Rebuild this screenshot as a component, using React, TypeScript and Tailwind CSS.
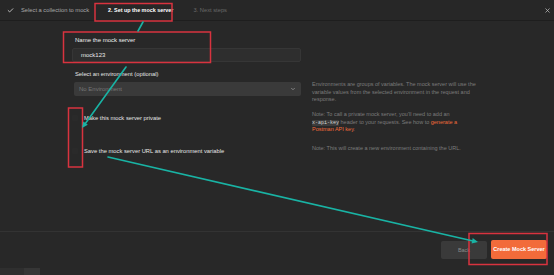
import { Check, X, ChevronDown } from 'lucide-react'

const font = { fontFamily: '"Liberation Sans", Arial, sans-serif' }

function Annotations() {
  return (
    <svg className="absolute inset-0 pointer-events-none" width={554} height={275} viewBox="0 0 554 275">
      {/* red highlight boxes */}
      <g fill="none" stroke="#d8333f" strokeWidth={1.5}>
        <rect x={95} y={3.5} width={77} height={17.5} />
        <rect x={63.5} y={32} width={147} height={30.5} />
        <rect x={68.5} y={108} width={14} height={59} />
        <rect x={469} y={233.5} width={78} height={31} />
      </g>
      {/* teal arrows */}
      <g stroke="#19b3a4" strokeWidth={1.6} strokeLinecap="round">
        <line x1={143} y1={22} x2={138} y2={31} />
        <line x1={126} y1={67} x2={85} y2={124} />
        <line x1={108} y1={157} x2={473} y2={241} />
      </g>
      <g fill="#19b3a4">
        <polygon points="82,128 87.8,124.8 83.3,121.5" />
        <polygon points="478,242 471.6,243.4 472.7,238" />
      </g>
    </svg>
  )
}

export default function App() {
  return (
    <div className="relative w-[554px] h-[275px] overflow-hidden bg-[#282828] text-white flex flex-col" style={font}>
      {/* step bar */}
      <div className="h-[21px] shrink-0 flex items-center border-b border-[#1e1e1e] bg-[#272727] text-[5.75px]">
        <Check className="ml-[7px] w-[7px] h-[7px] text-[#d0d0d0]" strokeWidth={3} />
        <span className="ml-[7px] text-[#a8a8a8]">Select a collection to mock</span>
        <span className="ml-[19px] text-[5.4px] font-bold text-white">2. Set up the mock server</span>
        <span className="ml-[20px] text-[#6a6a6a]">3. Next steps</span>
        <X className="ml-auto mr-[3px] w-[7px] h-[7px] text-[#bdbdbd]" strokeWidth={2.5} />
      </div>

      {/* form */}
      <div className="flex-1 flex pl-[75px] pt-[15px]">
        <div className="w-[226px] flex flex-col text-[6px] leading-[8px]">
          <span className="text-[#eeeeee]">Name the mock server</span>
          <div className="mt-[4px] h-[14px] -ml-[3px] w-[229px] flex items-center pl-[8px] bg-[#2e2e2e] border border-[#363636] rounded-[2px] text-[#e8e8e8]">
            mock123
          </div>
          <span className="mt-[8px] text-[5.8px] text-[#e6e6e6]">Select an environment (optional)</span>
          <div className="mt-[4px] h-[14px] -ml-[1px] w-[227px] flex items-center justify-between px-[5px] bg-[#3a3a3a] rounded-[2px] text-[#777777]">
            <span>No Environment</span>
            <ChevronDown className="w-[6px] h-[6px] text-[#9a9a9a]" strokeWidth={3} />
          </div>
          <label className="mt-[18px] -ml-[3px] flex items-center gap-[6px] text-[5.8px] text-[#e6e6e6]">
            <span className="w-[6px] h-[6px] rounded-[1px] bg-[#2a2a2a]" />
            Make this mock server private
          </label>
          <label className="mt-[25px] -ml-[3px] flex items-center gap-[6px] text-[5.8px] text-[#e6e6e6]">
            <span className="w-[6px] h-[6px] rounded-[1px] bg-[#2a2a2a]" />
            Save the mock server URL as an environment variable
          </label>
        </div>

        <div className="ml-[11px] mt-[45px] w-[174px] text-[5.5px] leading-[7.5px] text-[#7c7c7c]">
          <p>
            Environments are groups of variables. The mock server will use the variable values from the selected
            environment in the request and response.
          </p>
          <p className="mt-[7.5px]">
            Note: To call a private mock server, you'll need to add an
            <br />
            <code className="bg-[#3c3c3c] text-[#d6d6d6] text-[5px] leading-[6px] rounded-[1px]" style={{ fontFamily: '"Liberation Mono", monospace' }}>
              x-api-key
            </code>{' '}
            header to your requests. See how to <span className="text-[#f26b3a]">generate a</span>
            <br />
            <span className="text-[#f26b3a]">Postman API key</span>.
          </p>
          <p className="mt-[11.5px]">Note: This will create a new environment containing the URL.</p>
        </div>
      </div>

      {/* footer */}
      <div className="h-[37px] shrink-0 border-t border-[#333333] flex justify-end items-start pt-[9px] pr-[7px] gap-[4px] text-[5.5px] whitespace-nowrap">
        <button className="w-[46px] h-[18px] bg-[#3a3a3a] text-[#8a8a8a] rounded-[2px]">Back</button>
        <button className="w-[56px] h-[19px] -mt-[1px] bg-[#f26b3a] text-white font-semibold rounded-[2px]">Create Mock Server</button>
      </div>
      <div className="h-[7px] shrink-0 flex">
        <div className="w-[24px] bg-[#2f2f2f]" />
        <div className="w-[16px] bg-[#363636]" />
      </div>

      <Annotations />
    </div>
  )
}
